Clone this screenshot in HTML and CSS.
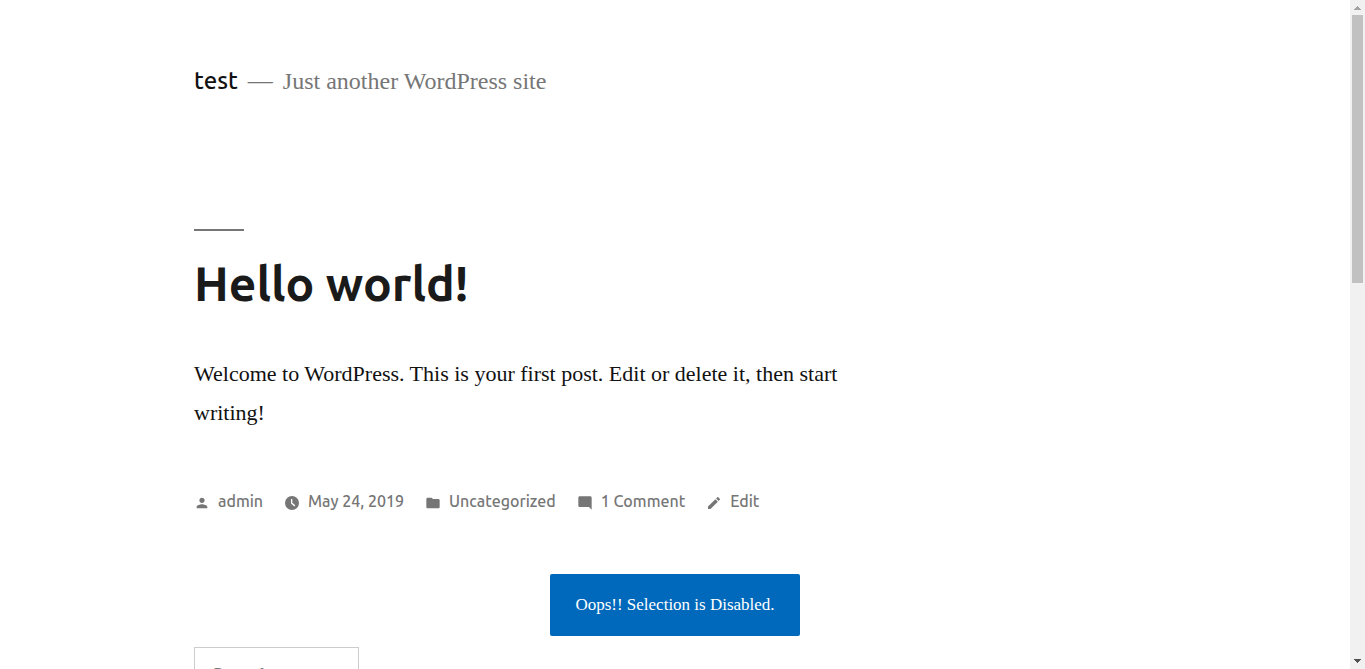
FILE: index.html
```html
<!DOCTYPE html>
<html lang="en">
<head>
<meta charset="utf-8">
<title>test – Just another WordPress site</title>
<link rel="stylesheet" href="styles.css">
</head>
<body>
<div class="viewport">
<div class="site">
  <header class="site-header">
    <p class="site-title"><a href="#">test</a></p>
    <span class="separator">—</span>
    <p class="site-description">Just another WordPress site</p>
  </header>
  <main>
    <article class="entry">
      <h1 class="entry-title"><a href="#">Hello world!</a></h1>
      <p class="entry-content">Welcome to WordPress. This is your first post. Edit or delete it, then start writing!</p>
      <footer class="entry-footer">
        <a class="meta" href="#"><svg class="icon" viewBox="0 0 24 24"><path d="M12 12c2.21 0 4-1.79 4-4s-1.79-4-4-4-4 1.79-4 4 1.79 4 4 4zm0 2c-2.67 0-8 1.34-8 4v2h16v-2c0-2.66-5.33-4-8-4z"/></svg>admin</a>
        <a class="meta" href="#"><svg class="icon" viewBox="0 0 16 16"><path fill-rule="evenodd" d="M8 1a7 7 0 1 0 0 14A7 7 0 0 0 8 1zM7 4h1.300v3.700l3 2.600-.9 1.100L7 8.500z"/></svg>May 24, 2019</a>
        <a class="meta" href="#"><svg class="icon" viewBox="0 0 24 24"><path d="M10 4H4c-1.100 0-1.990.9-1.990 2L2 18c0 1.100.9 2 2 2h16c1.100 0 2-.9 2-2V8c0-1.100-.9-2-2-2h-8l-2-2z"/></svg>Uncategorized</a>
        <a class="meta" href="#"><svg class="icon" viewBox="0 0 24 24"><path d="M21.990 4c0-1.100-.89-2-1.990-2H4c-1.100 0-2 .9-2 2v12c0 1.100.9 2 2 2h14l4 4-.01-18z"/></svg>1 Comment</a>
        <a class="meta" href="#"><svg class="icon" viewBox="0 0 24 24"><path d="M3 17.250V21h3.750L17.810 9.940l-3.750-3.750L3 17.250zM20.710 7.040c.39-.39.39-1.020 0-1.410l-2.340-2.340c-.39-.39-1.020-.39-1.410 0l-1.830 1.830 3.750 3.750 1.830-1.830z"/></svg>Edit</a>
      </footer>
    </article>
  </main>
  <form class="search-form">
    <input class="search-field" type="search" placeholder="Search …" aria-label="Search for:">
  </form>
</div>
<div class="toast" role="status">Oops!! Selection is Disabled.</div>
</div>
<div class="scrollbar" aria-hidden="true">
  <svg class="arrow" viewBox="0 0 15 15"><path fill="#a3a3a3" d="M4 10h7v-1h-1v-1h-1v-1h-1v-1h-1v1h-1v1h-1v1h-1z"/></svg>
  <div class="track"><div class="thumb"></div></div>
  <svg class="arrow" viewBox="0 0 15 15"><path fill="#505050" d="M4 5h7v1h-1v1h-1v1h-1v1h-1v-1h-1v-1h-1v-1h-1z"/></svg>
</div>
</body>
</html>
```
FILE: styles.css
```css
* { box-sizing: border-box; }

body {
  margin: 0;
  height: 100vh;
  display: flex;
  overflow: hidden;
  background: #fff;
  color: #111;
  font-family: "Liberation Serif", serif;
  font-size: 22px;
}

a { color: inherit; text-decoration: none; }
p, h1 { margin: 0; }

.viewport {
  position: relative;
  flex: 1;
  min-width: 0;
  overflow: hidden;
}

.site { padding: 61px calc(10% + 59px) 0; }

.site-header {
  display: flex;
  align-items: baseline;
  gap: 10px;
  color: #767676;
  font-size: 25px;
  line-height: 40px;
}

.site-title {
  color: #111;
  font-family: Ubuntu, "Noto Sans", sans-serif;
  font-size: 24px;
  font-weight: 500;
}

.site-description { font-size: 24px; }

.entry { margin-top: 128px; max-width: 660px; }

.entry-title {
  color: #1a1a1a;
  font-family: Ubuntu, "Noto Sans", sans-serif;
  font-size: 48px;
  font-weight: 700;
  line-height: 64px;
}

.entry-title::before {
  content: "";
  display: block;
  width: 50px;
  height: 2px;
  margin-bottom: 20px;
  background: #767676;
}

.entry-content { margin-top: 39px; line-height: 39px; }

.entry-footer {
  display: flex;
  gap: 21px;
  margin-top: 56px;
  color: #767676;
  font-family: Ubuntu, "Noto Sans", sans-serif;
  font-size: 16px;
  font-weight: 500;
  line-height: 26px;
  white-space: nowrap;
}

.meta { display: flex; align-items: center; gap: 8px; }

.icon {
  width: 16px;
  height: 16px;
  margin-top: 3px;
  fill: currentColor;
}

.search-form { margin-top: 133px; }

.search-field {
  display: block;
  width: 165px;
  height: 56px;
  padding: 8px 16px;
  border: 1px solid #ccc;
  border-radius: 0;
  background: #fff;
  font: 22px "Liberation Serif", serif;
  -webkit-appearance: none;
}

.search-field::placeholder { color: #767676; }

.toast {
  position: absolute;
  bottom: 33px;
  left: 50%;
  transform: translateX(-50%);
  width: 250px;
  padding: 20px;
  border-radius: 2px;
  background: #0069bb;
  color: #fff;
  font-size: 17px;
  line-height: 22px;
  text-align: center;
  white-space: nowrap;
}

.scrollbar {
  display: flex;
  flex-direction: column;
  width: 15px;
  background: #f1f1f1;
}

.arrow { width: 15px; height: 15px; shape-rendering: crispEdges; }
.track { flex: 1; padding: 0 2px; }
.thumb { height: 42%; background: #c1c1c1; }
```
